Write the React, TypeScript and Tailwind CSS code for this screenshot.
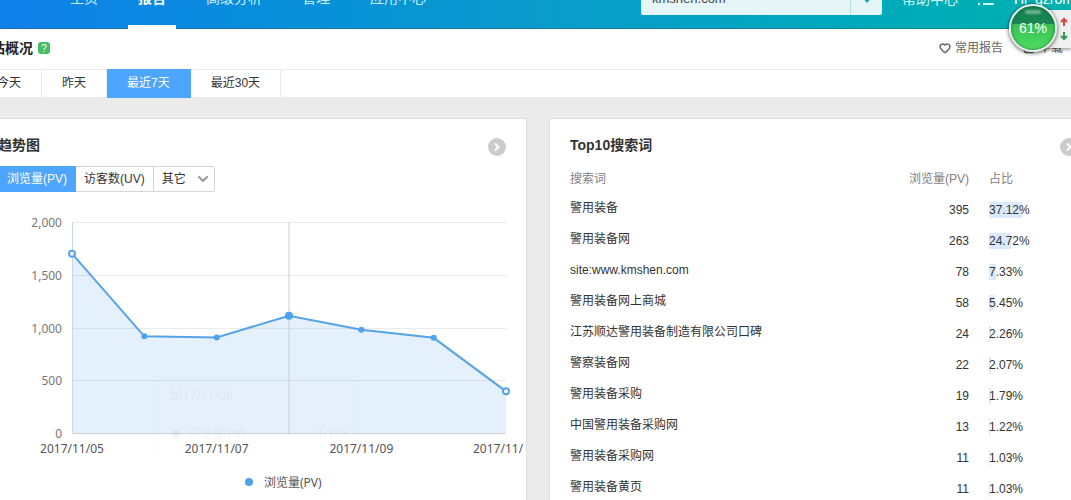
import React, { useState } from "react";
import { ChevronDown, ChevronRight, Download, Heart } from "lucide-react";

const navigation = ["主页", "报告", "高级分析", "管理", "应用中心"];

const ranges = ["今天", "昨天", "最近7天", "最近30天"];

const keywords = [
    { name: "警用装备", pv: 395, share: 37.12 },
    { name: "警用装备网", pv: 263, share: 24.72 },
    { name: "site:www.kmshen.com", pv: 78, share: 7.33 },
    { name: "警用装备网上商城", pv: 58, share: 5.45 },
    { name: "江苏顺达警用装备制造有限公司口碑", pv: 24, share: 2.26 },
    { name: "警察装备网", pv: 22, share: 2.07 },
    { name: "警用装备采购", pv: 19, share: 1.79 },
    { name: "中国警用装备采购网", pv: 13, share: 1.22 },
    { name: "警用装备采购网", pv: 11, share: 1.03 },
    { name: "警用装备黄页", pv: 11, share: 1.03 },
];

const trend = [
    { date: "2017/11/05", pv: 1700 },
    { date: "2017/11/06", pv: 916 },
    { date: "2017/11/07", pv: 905 },
    { date: "2017/11/08", pv: 1112 },
    { date: "2017/11/09", pv: 978 },
    { date: "2017/11/10", pv: 902 },
    { date: "2017/11/11", pv: 395 },
];

// Plot area inside the chart's viewBox
const PLOT = { left: 94, right: 528, top: 22, bottom: 233, max: 2000 };

function px(index: number) {
    return PLOT.left + (index * (PLOT.right - PLOT.left)) / (trend.length - 1);
}

function py(value: number) {
    return PLOT.bottom - (value / PLOT.max) * (PLOT.bottom - PLOT.top);
}

function TrendChart() {
    const line = trend.map((d, i) => `${px(i)},${py(d.pv)}`).join(" ");
    const area = `${PLOT.left},${PLOT.bottom} ${line} ${PLOT.right},${PLOT.bottom}`;
    const last = trend.length - 1;

    return (
        <svg
            viewBox="0 0 548 310"
            className="block w-full font-['Noto_Sans','Noto_Sans_CJK_SC',sans-serif] text-[12px]"
            role="img"
            aria-label="浏览量(PV)"
        >
            <polygon points={area} fill="#e4f0fc" />
            {[0, 500, 1000, 1500, 2000].map((tick) => (
                <g key={tick}>
                    <line
                        x1={PLOT.left}
                        x2={PLOT.right}
                        y1={Math.round(py(tick)) + 0.5}
                        y2={Math.round(py(tick)) + 0.5}
                        stroke={tick === 0 ? "#ccd3da" : "#000"}
                        strokeOpacity={tick === 0 ? 1 : 0.08}
                    />
                    <text x={84} y={py(tick) + 5} textAnchor="end" fill="#777">
                        {tick.toLocaleString("en-US")}
                    </text>
                </g>
            ))}
            <line x1={94.5} x2={94.5} y1={PLOT.top} y2={PLOT.bottom} stroke="#cfd6dd" />

            {/* tooltip fading out */}
            <g opacity={0.04}>
                <rect x={178} y={182} width={200} height={76} rx={3} fill="#fff" stroke="#000" strokeOpacity={0.3} />
                <text x={191} y={200} fill="#000">2017/11/08</text>
                <circle cx={198} cy={234} r={4} fill="#000" />
                <text x={210} y={238} fill="#000">浏览量(PV)</text>
                <text x={339} y={238} fill="#000">1,112</text>
            </g>

            <line x1={311} x2={311} y1={PLOT.top} y2={PLOT.bottom + 2} stroke="#c9cfd6" />
            <polyline points={line} fill="none" stroke="#57a3e8" strokeWidth={2} />
            {trend.map((d, i) => {
                const edge = i === 0 || i === last;
                return (
                    <circle
                        key={d.date}
                        cx={px(i)}
                        cy={py(d.pv)}
                        r={d.date === "2017/11/08" ? 4 : 3}
                        fill={edge ? "#fff" : "#4da2ee"}
                        stroke={edge ? "#57a3e8" : "none"}
                        strokeWidth={edge ? 2 : 0}
                    />
                );
            })}
            {trend.map((d, i) =>
                i % 2 === 0 && i !== last ? (
                    <text key={d.date} x={px(i)} y={253} textAnchor="middle" fill="#555">
                        {d.date}
                    </text>
                ) : null
            )}
            <text x={495} y={253} fill="#555">2017/11/</text>

            <circle cx={271} cy={282} r={4} fill="#4da2ee" />
            <text x={286} y={287} fill="#555">浏览量(PV)</text>
        </svg>
    );
}

function CardHeader({ title }: { title: string }) {
    return (
        <div className="flex h-7 items-center justify-between px-5">
            <h2 className="pb-1 text-[14px] font-bold text-[#333]">{title}</h2>
            <button
                type="button"
                aria-label="查看更多"
                className="flex size-[18px] items-center justify-center rounded-full bg-[#ccc] text-white"
            >
                <ChevronRight className="size-3" strokeWidth={4} />
            </button>
        </div>
    );
}

function SpeedBall() {
    return (
        <div className="absolute top-[4px] right-0 z-10 flex h-[50px] items-center">
            <div className="flex h-[38px] w-[38px] flex-col items-end justify-center gap-1 bg-[#f0f0f0] pr-[2px] shadow-[0_2px_3px_rgba(0,0,0,0.35)]">
                <svg viewBox="0 0 10 10" className="size-[10px]" fill="none" stroke="#d2483c" strokeWidth={2}>
                    <path d="M5 9V2M2 5l3-3 3 3" />
                </svg>
                <svg viewBox="0 0 10 10" className="size-[10px]" fill="none" stroke="#2f9a50" strokeWidth={2}>
                    <path d="M5 1v7M2 5l3 3 3-3" />
                </svg>
            </div>
            <div className="absolute top-0 right-[14px] size-12 overflow-hidden rounded-full border-2 border-[#e8eeec] bg-linear-to-b from-[#14804f] to-[#1f9455] shadow-[0_1px_4px_rgba(0,0,0,0.7)]">
                <div className="absolute inset-x-0 bottom-0 h-[26px] bg-linear-to-b from-[#36c052] to-[#50dc62]" />
                <div className="absolute inset-0 rounded-full shadow-[inset_0_0_3px_rgba(0,60,30,0.6)]" />
                <div className="absolute top-[4px] left-[14px] h-[4px] w-4 rounded-full bg-white/40 blur-[1px]" />
                <span className="absolute inset-0 flex items-center justify-center text-[14px] text-white">61%</span>
            </div>
        </div>
    );
}

export default function App() {
    const [range, setRange] = useState("最近7天");

    return (
        <div className="relative h-screen overflow-hidden bg-[#ebebeb] font-['Liberation_Sans','Noto_Sans_CJK_SC',sans-serif] text-[12px] text-[#333]">
            {/* Only the lower part of the bar is scrolled into view */}
            <header className="flex h-[29px] items-end justify-between overflow-hidden bg-linear-to-r from-[#1180ea] via-[#0a9bcb] to-[#00b2b0] pl-[60px] shadow-[inset_0_-1px_0_rgba(60,60,60,0.3)]">
                <nav className="flex shrink-0 gap-5 text-[14px]">
                    {navigation.map((item) => (
                        <a
                            key={item}
                            href="#"
                            className={[
                                "flex h-[62px] items-center border-y-4 border-transparent px-[10px]",
                                item === "报告" ? "border-b-white font-bold text-white" : "text-[#cdf0fb]",
                            ].join(" ")}
                        >
                            {item}
                        </a>
                    ))}
                </nav>
                <div className="flex h-[60px] shrink-0 items-center text-[14px] text-[#cdf3f3]">
                    <div className="relative mr-5">
                        <select
                            aria-label="网站"
                            className="block h-8 w-[241px] appearance-none rounded-[2px] bg-[#e6f5f6] pl-[11px] text-[13px] text-[#444]"
                        >
                            <option>kmshen.com</option>
                        </select>
                        <span className="pointer-events-none absolute inset-y-0 right-0 flex w-8 items-center justify-center border-l border-[#b5dfe1]">
                            <svg viewBox="0 0 12 8" className="h-2 w-3" fill="#12a5ab">
                                <path d="M0 1h12L6 8z" />
                            </svg>
                        </span>
                    </div>
                    <a href="#" className="mr-5">帮助中心</a>
                    <button type="button" aria-label="消息" className="mr-5">
                        <svg viewBox="0 0 16 14" className="h-[14px] w-4" fill="currentColor">
                            <path d="M0 1h2v2H0zM5 1h11v2H5zM0 6h2v2H0zM5 6h11v2H5zM0 11h2v2H0zM5 11h11v2H5z" />
                        </svg>
                    </button>
                    <a href="#" className="w-[57px] whitespace-nowrap text-white">Hi_qzrom</a>
                </div>
            </header>

            <SpeedBall />

            <div className="-mr-7 -ml-[23px]">
                <div className="flex h-10 items-center justify-between bg-white pr-[36px] pb-[2px]">
                    <div className="flex items-center gap-[5px]">
                        <h1 className="text-[14px] font-bold text-[#222]">网站概况</h1>
                        <button
                            type="button"
                            aria-label="帮助"
                            className="flex size-3 items-center justify-center rounded-[3px] bg-[#45bd68] text-[10px] text-white"
                        >
                            ?
                        </button>
                    </div>
                    <div className="flex gap-5 text-[#666]">
                        <a href="#" className="flex items-center gap-1">
                            <Heart className="size-3" strokeWidth={3} />
                            常用报告
                        </a>
                        <a href="#" className="flex items-center gap-1">
                            <Download className="size-3" strokeWidth={3} />
                            下载
                        </a>
                    </div>
                </div>

                <div className="flex h-[29px] border-y border-[#ebebeb] bg-white">
                    {ranges.map((item) => (
                        <button
                            key={item}
                            type="button"
                            onClick={() => setRange(item)}
                            className={[
                                "-my-px border-r px-5 pb-[2px]",
                                item === range
                                    ? "border-[#4da5fd] bg-[#4da5fd] text-white"
                                    : "border-[#ebebeb] text-[#333]",
                            ].join(" ")}
                        >
                            {item}
                        </button>
                    ))}
                </div>

                <main className="grid grid-cols-2 gap-[22px] pt-5">
                    <section className="overflow-hidden border border-[#ddd] bg-white pt-[14px]">
                        <CardHeader title="趋势图" />
                        <div className="mt-[5px] flex h-[26px] px-5">
                            <button type="button" className="bg-[#4da5fd] px-[9px] text-white">
                                浏览量(PV)
                            </button>
                            <button type="button" className="border border-l-0 border-[#d5d5d5] px-2">
                                访客数(UV)
                            </button>
                            <div className="relative">
                                <select
                                    aria-label="其它指标"
                                    className="block h-full w-[61px] appearance-none rounded-r-[2px] border border-l-0 border-[#d5d5d5] pl-2"
                                >
                                    <option>其它</option>
                                </select>
                                <ChevronDown
                                    className="pointer-events-none absolute top-[5px] right-1 size-4 text-[#999]"
                                    strokeWidth={3}
                                />
                            </div>
                        </div>
                        <div className="mt-2">
                            <TrendChart />
                        </div>
                    </section>

                    <section className="border border-[#ddd] bg-white pt-[14px]">
                        <CardHeader title="Top10搜索词" />
                        <div className="mt-1 px-5">
                            <table className="w-full table-fixed">
                                <thead>
                                    <tr className="h-[29px] text-[#808080]">
                                        <th className="p-0 pb-[2px] text-left font-normal">搜索词</th>
                                        <th className="w-[80px] p-0 pb-[2px] text-right font-normal">浏览量(PV)</th>
                                        <th className="w-[109px] p-0 pb-[2px] pl-5 text-left font-normal">占比</th>
                                    </tr>
                                </thead>
                                <tbody>
                                    {keywords.map((row) => (
                                        <tr key={row.name} className="h-[31px]">
                                            <td className="p-0 pb-1">
                                                <a href="#">{row.name}</a>
                                            </td>
                                            <td className="p-0 text-right">{row.pv}</td>
                                            <td className="p-0 pl-5">
                                                <div className="relative h-4 leading-4">
                                                    <div
                                                        className="absolute inset-y-0 left-0 bg-[#dbe9fc]"
                                                        style={{ width: `${row.share}%` }}
                                                    />
                                                    <span className="relative">{row.share.toFixed(2)}%</span>
                                                </div>
                                            </td>
                                        </tr>
                                    ))}
                                </tbody>
                            </table>
                        </div>
                    </section>
                </main>
            </div>
        </div>
    );
}
